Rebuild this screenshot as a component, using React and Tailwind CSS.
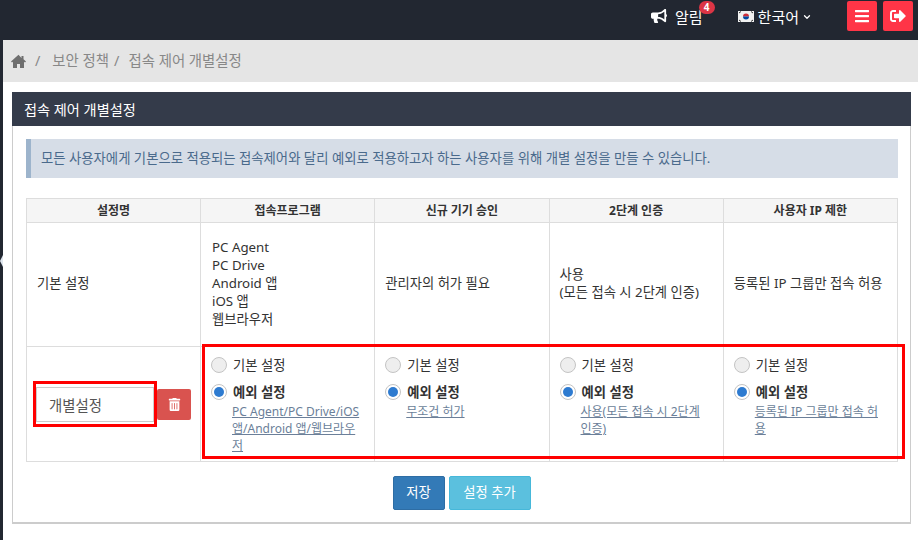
import React from 'react';
import { FaBullhorn, FaBars, FaSignOutAlt, FaTrashAlt } from 'react-icons/fa';
import { FiChevronDown } from 'react-icons/fi';

const columns = [
    { label: '접속프로그램', detail: 'PC Agent/PC Drive/iOS 앱/Android 앱/웹브라우저' },
    { label: '신규 기기 승인', detail: '무조건 허가' },
    { label: '2단계 인증', detail: '사용(모든 접속 시 2단계 인증)' },
    { label: '사용자 IP 제한', detail: '등록된 IP 그룹만 접속 허용' },
];

const Radio = ({ checked }) => (
    <span className={`flex size-[16px] shrink-0 items-center justify-center rounded-full border border-[#c4c4c4] ${checked ? 'bg-white' : 'bg-[#eeeeee]'}`}>
        {checked && <span className="size-[10px] rounded-full bg-[#2e7bd0]" />}
    </span>
);

const OptionCell = ({ detail }) => (
    <td className="border border-[#dddddd] pl-[10px] pr-[14px] pt-[9px] align-top">
        <div className="flex h-[18px] items-center gap-[6px]">
            <Radio />
            <span className="pt-[2px] text-[#333333]">기본 설정</span>
        </div>
        <div className="mt-[9px] flex h-[18px] items-center gap-[6px]">
            <Radio checked />
            <span className="pt-[2px] font-bold text-[#333333]">예외 설정</span>
        </div>
        <a className="mt-[2px] block break-all pl-[21px] text-[12px] leading-[17px] text-[#6b7f99] underline">{detail}</a>
    </td>
);

const App = () => {
    return (
        <div className="relative h-[540px] w-[918px] overflow-hidden bg-white text-[13.3px] text-[#333333] font-['Noto_Sans','Noto_Sans_CJK_KR',sans-serif]">
            <header className="flex h-[40px] items-center justify-end bg-[#222731] pb-[8px] pr-[5px] text-white">
                <FaBullhorn className="mr-[8px] size-[16px]" />
                <span className="relative mr-[35px] pt-[2px] text-[15px]">
                    알림
                    <span className="absolute -right-[12px] top-[-3px] flex h-[13px] w-[16px] items-center justify-center rounded-full bg-[#dc3545] text-[10px] font-bold">4</span>
                </span>
                <svg className="mr-[4px] h-[11px] w-[16px]" viewBox="0 0 16 11">
                    <rect width="16" height="11" fill="#f1f1f1" />
                    <path d="M5 5.5a3 3 0 0 1 6 0z" fill="#cd2e3a" />
                    <path d="M5 5.5a3 3 0 0 0 6 0z" fill="#0047a0" />
                    <path d="M1 2l2-1.5M1 9l2 1.5M15 2l-2-1.5M15 9l-2 1.5" stroke="#333333" strokeWidth="1" />
                </svg>
                <span className="pt-[2px] text-[15px]">한국어</span>
                <FiChevronDown className="ml-[3px] mr-[35px] mt-[1px] size-[10px]" strokeWidth={3} />
                <button className="mr-[6px] flex size-[30px] items-center justify-center rounded-[2px] bg-[#ff3547]">
                    <FaBars className="size-[16px]" />
                </button>
                <button className="flex size-[30px] items-center justify-center rounded-[2px] bg-[#ff3547]">
                    <FaSignOutAlt className="size-[16px]" />
                </button>
            </header>

            <div className="flex h-[500px]">
                <aside className="relative w-[3px] shrink-0 bg-[#222731]">
                    <svg className="absolute left-0 top-[215px] h-[12px] w-[3px]" viewBox="0 0 3 12">
                        <path d="M3 0v12L0 6z" fill="#dfe6ee" />
                    </svg>
                </aside>
                <main className="min-w-0 flex-1">
                    <nav className="flex h-[42px] items-center bg-[#e5e5e5] pl-[8px] text-[14.4px] text-[#888888]">
                        <svg className="size-[15px] text-[#6f6f6f]" viewBox="0 0 15 15" fill="currentColor">
                            <path d="M7.5.8L0 7.5l1 1.1 1-.8V14h4v-4h3v4h4V7.8l1 .8 1-1.1-2.5-2.2V2h-2v1.9z" />
                        </svg>
                        <span className="ml-[9px]">/</span>
                        <span className="ml-[12px]">보안 정책</span>
                        <span className="ml-[5px]">/</span>
                        <span className="ml-[9px]">접속 제어 개별설정</span>
                    </nav>

                    <section className="ml-[9px] mr-[7px] mt-[10px] h-[432px] border border-t-0 border-b-2 border-[#cccccc]">
                        <h2 className="-mx-px flex h-[34px] items-center bg-[#343b4a] pl-[12px] pt-[2px] text-[14.2px] font-normal text-white">접속 제어 개별설정</h2>

                        <div className="ml-[13px] mr-[12px] mt-[13px] flex h-[39px] items-center border-l-[5px] border-[#9db4cc] bg-[#d6dde7] pl-[10px] text-[13.35px] text-[#4a6a8c]">
                            모든 사용자에게 기본으로 적용되는 접속제어와 달리 예외로 적용하고자 하는 사용자를 위해 개별 설정을 만들 수 있습니다.
                        </div>

                        <table className="ml-[13px] mt-[20px] w-[872px] table-fixed border-collapse">
                            <thead>
                                <tr className="h-[24px] bg-[#f5f5f5]">
                                    <th className="w-[174px] border border-[#dddddd] text-[12px] font-bold">설정명</th>
                                    {columns.map((col) => (
                                        <th key={col.label} className="border border-[#dddddd] text-[12px] font-bold">{col.label}</th>
                                    ))}
                                </tr>
                            </thead>
                            <tbody>
                                <tr className="h-[124px]">
                                    <td className="border border-[#dddddd] pb-[2px] pl-[10px]">기본 설정</td>
                                    <td className="border border-[#dddddd] pb-[3px] pl-[11px] leading-[18px]">
                                        PC Agent<br />PC Drive<br />Android 앱<br />iOS 앱<br />웹브라우저
                                    </td>
                                    <td className="border border-[#dddddd] pb-[2px] pl-[10px]">관리자의 허가 필요</td>
                                    <td className="border border-[#dddddd] pb-[3px] pl-[10px] leading-[18px]">사용<br />(모든 접속 시 2단계 인증)</td>
                                    <td className="border border-[#dddddd] pb-[2px] pl-[10px]">등록된 IP 그룹만 접속 허용</td>
                                </tr>
                                <tr className="h-[115px]">
                                    <td className="border border-[#dddddd] pl-[9px]">
                                        <div className="flex items-center gap-[3px]">
                                            <input readOnly value="개별설정" className="h-[35px] w-[118px] border border-[#cccccc] pl-[12px] text-[14.4px] text-[#555555] outline-none" />
                                            <button className="flex h-[31px] w-[34px] items-center justify-center rounded-[2px] bg-[#d9534f] text-white">
                                                <FaTrashAlt className="size-[13px]" />
                                            </button>
                                        </div>
                                    </td>
                                    {columns.map((col) => (
                                        <OptionCell key={col.label} detail={col.detail} />
                                    ))}
                                </tr>
                            </tbody>
                        </table>

                        <div className="mt-[14px] flex justify-center gap-[4px]">
                            <button className="h-[34px] w-[52px] rounded-[2px] border border-[#2e6da4] bg-[#337ab7] text-white">저장</button>
                            <button className="h-[34px] w-[82px] rounded-[2px] border border-[#46b8da] bg-[#5bc0de] text-white">설정 추가</button>
                        </div>
                    </section>
                </main>
            </div>

            {/* red annotation boxes drawn over the screenshot */}
            <div className="absolute left-[33px] top-[381px] h-[46px] w-[124px] border-[3px] border-[#ff0000]" />
            <div className="absolute left-[202px] top-[344px] h-[115px] w-[703px] border-[3px] border-[#ff0000]" />
        </div>
    );
};

export default App;
